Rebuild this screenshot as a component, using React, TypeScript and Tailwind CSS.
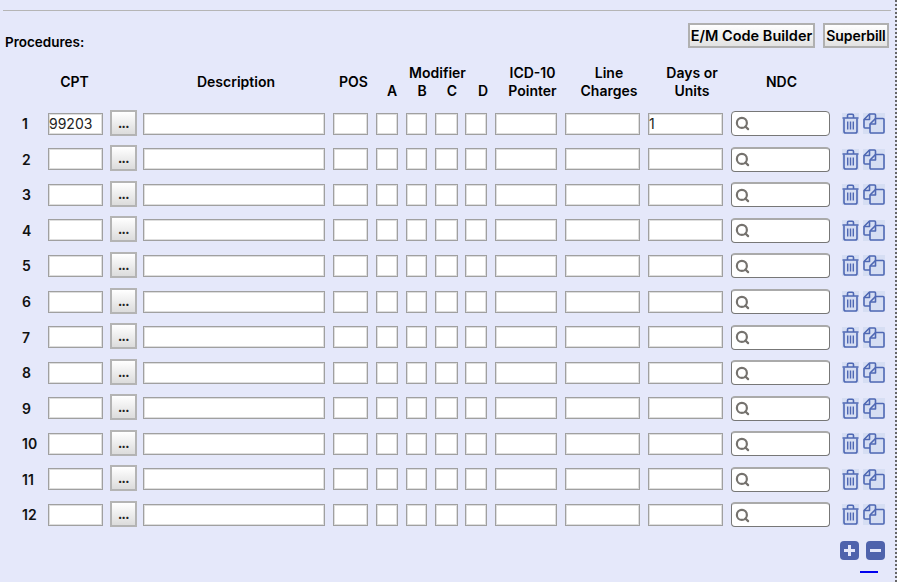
import { Search } from 'lucide-react'

const ROWS = [1, 2, 3, 4, 5, 6, 7, 8, 9, 10, 11, 12]
const inputCls = 'h-[22px] border border-[#a0a0a0] bg-white px-0 text-[14px] leading-none text-[#222] shadow-[inset_0_0_0_1px_#dedede] outline-none'

function TrashIcon() {
  return (
    <svg width="17" height="21" viewBox="0 0 17 21" className="bg-[#d6def3]" fill="none" stroke="#4f68b4" strokeWidth="1.6" strokeLinejoin="round">
      <path d="M.5 5h16M5.500 4.500V2.500C5.500 1.700 6 1.200 6.800 1.200h3.400c.8 0 1.300.5 1.300 1.300v2" />
      <path d="M2 5.500v12.700c0 1 .7 1.800 1.800 1.800h9.400c1.100 0 1.800-.8 1.800-1.800V5.500" />
      <path d="M5.700 8.500v8M8.500 8.500v8M11.300 8.500v8" strokeWidth="1.400" />
    </svg>
  )
}

function CopyIcon() {
  return (
    <svg width="22" height="21" viewBox="0 0 22 21" className="bg-[#d6def3]" fill="none" stroke="#4f68b4" strokeWidth="1.600" strokeLinejoin="round">
      <path d="M12.500 5.500V2c0-.6-.4-1-1-1H6.500L1 6.500V14c0 .6.400 1 1 1h5" />
      <path d="M6.500 1v5.500H1" />
      <path d="M21 19c0 .6-.4 1-1 1H8c-.6 0-1-.4-1-1v-8l5.500-5.500H20c.6 0 1 .4 1 1z" fill="#d6def3" />
      <path d="M12.500 5.500V11H7" />
    </svg>
  )
}

function Row({ n }: { n: number }) {
  return (
    <div className="flex h-[35.55px] items-center">
      <div className="w-[48px] pl-[22px] text-left text-[14px] font-semibold text-[#111]">{n}</div>
      <input readOnly value={n === 1 ? '99203' : ''} className={`${inputCls} w-[55px]`} />
      <button className="ml-[7px] flex h-[26px] w-[27px] -translate-y-px items-end justify-center border-2 border-[#b4b4b4] bg-gradient-to-b from-white to-[#dcdcdc] pb-[4px] text-[12px] leading-none font-extrabold tracking-[-0.5px] text-[#222]">...</button>
      <input readOnly className={`${inputCls} ml-[6px] w-[182px]`} />
      <input readOnly className={`${inputCls} ml-[8px] w-[35px]`} />
      <input readOnly className={`${inputCls} ml-[8px] w-[22px]`} />
      <input readOnly className={`${inputCls} ml-[8px] w-[21px]`} />
      <input readOnly className={`${inputCls} ml-[8px] w-[23px]`} />
      <input readOnly className={`${inputCls} ml-[7px] w-[22px]`} />
      <input readOnly className={`${inputCls} ml-[8px] w-[62px]`} />
      <input readOnly className={`${inputCls} ml-[8px] w-[75px]`} />
      <input readOnly value={n === 1 ? '1' : ''} className={`${inputCls} ml-[8px] w-[75px]`} />
      <div className={`ml-[8px] flex h-[25px] w-[99px] items-center rounded-[4px] border border-[#777] bg-white pl-[3px] ${n === 1 ? '' : 'border-t-2 border-t-[#aaaaaa]'}`}>
        <Search size={15} strokeWidth={3.500} className="text-[#75726e]" />
      </div>
      <div className="ml-[12px] flex gap-[4px]">
        <TrashIcon />
        <CopyIcon />
      </div>
    </div>
  )
}

export default function App() {
  return (
    <div className="h-[582px] w-[903px] overflow-hidden bg-white font-['Inter','Noto_Sans',sans-serif]">
      <div className="h-full w-[897px] border-r-2 border-dotted border-[#666] bg-[#e5e8fa] pt-[10px]">
        <div className="ml-[3px] mr-[4px] border-t border-[#b5b5b5]"></div>
        <div className="mt-[12px] flex h-[26px] items-start justify-between pr-[6px] pl-[5px]">
          <div className="mt-[9px] text-[13.500px] font-semibold text-[#000]">Procedures:</div>
          <div className="flex gap-[8px]">
            <button className="h-[25px] w-[127px] border-2 border-[#b0b0b0] bg-gradient-to-b from-white to-[#e2e2e2] text-[14.500px] font-semibold text-[#000]">E/M Code Builder</button>
            <button className="h-[25px] w-[66px] border-2 border-[#b0b0b0] bg-gradient-to-b from-white to-[#e2e2e2] text-[14px] font-semibold tracking-[-0.1px] text-[#000]">Superbill</button>
          </div>
        </div>
        <div className="mt-[15px] flex h-[36px] text-center text-[14px] leading-[18px] font-semibold text-[#000]">
          <div className="flex w-[143px] items-center justify-center pl-[6px]"><span className="w-[100px]">CPT</span></div>
          <div className="flex w-[190px] items-center justify-center pr-[4px]">Description</div>
          <div className="flex w-[43px] items-center pl-[6px]">POS</div>
          <div className="w-[119px]">
            <div className="pl-[4px]">Modifier</div>
            <div className="flex">
              <span className="w-[30px] pl-[2px]">A</span>
              <span className="w-[29px] pl-[3px]">B</span>
              <span className="w-[30px] pl-[4px]">C</span>
              <span className="w-[30px] pl-[6px]">D</span>
            </div>
          </div>
          <div className="w-[70px] pl-[5px]">ICD-10<br />Pointer</div>
          <div className="w-[83px] pl-[5px]">Line<br />Charges</div>
          <div className="w-[83px] pl-[5px]">Days or<br />Units</div>
          <div className="flex w-[99px] items-center justify-center pl-[2px]">NDC</div>
        </div>
        <div className="mt-[6px]">
          {ROWS.map((n) => <Row key={n} n={n} />)}
        </div>
        <div className="flex justify-end gap-[7px] pr-[10px] pt-[8px]">
          <div className="flex h-[19px] w-[19px] items-center justify-center rounded-[4px] bg-[#4f63ac]">
            <svg width="13" height="13" viewBox="0 0 13 13"><path d="M6.500 1v11M1 6.500h11" stroke="#e5e8fa" strokeWidth="3" /></svg>
          </div>
          <div className="flex h-[19px] w-[19px] items-center justify-center rounded-[4px] bg-[#4f63ac]">
            <svg width="13" height="13" viewBox="0 0 13 13"><path d="M1 6.500h11" stroke="#e5e8fa" strokeWidth="3" /></svg>
          </div>
        </div>
        <div className="ml-auto mr-[17px] mt-[11px] h-[2px] w-[18px] bg-[#0000ee]"></div>
      </div>
    </div>
  )
}
